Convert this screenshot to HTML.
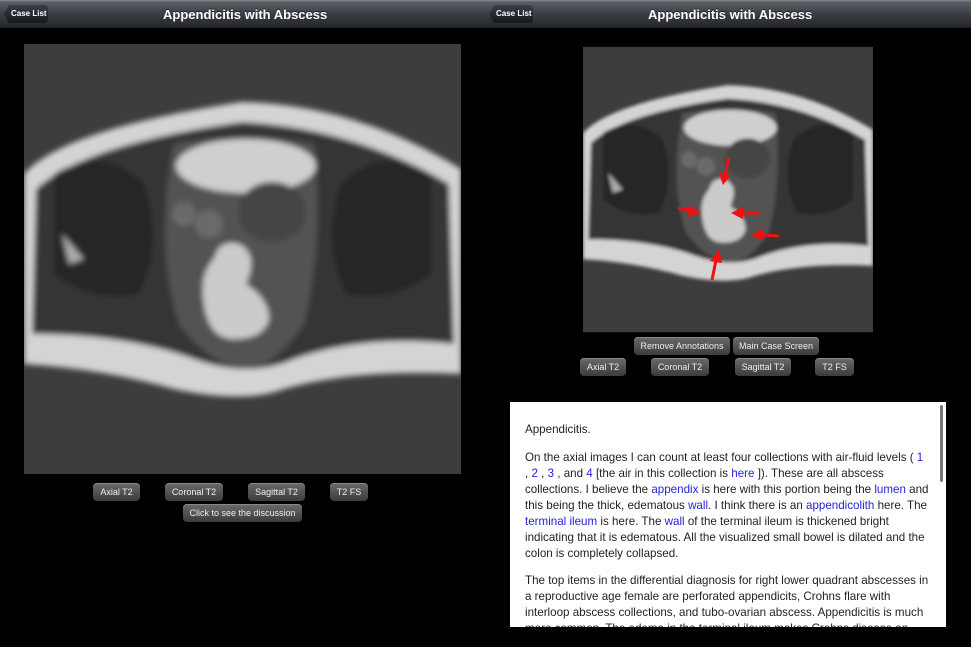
<!DOCTYPE html>
<html><head><meta charset="utf-8"><style>
*{margin:0;padding:0;box-sizing:border-box}
body{width:971px;height:647px;background:#000;position:relative;overflow:hidden;font-family:"Liberation Sans",sans-serif}
.hdr{position:absolute;left:0;top:0;width:971px;height:28px;background:linear-gradient(#8a8e94 0,#5a5f66 2px,#3a3e44 14px,#24272b 27px,#111 28px)}
.title{position:absolute;top:7px;color:#fff;font-weight:bold;font-size:13px;text-shadow:0 -1px 0 #222}
.back{position:absolute;top:5px;height:18px;width:44px;color:#fff;font-weight:bold;font-size:8px;line-height:18px;padding-left:7px;background:linear-gradient(#3a3e45,#15181c);border-radius:3px;clip-path:polygon(5px 0,100% 0,100% 100%,5px 100%,0 50%);}
.btn{position:absolute;height:18px;color:#eee;font-size:9px;line-height:18px;text-align:center;border-radius:4px;background:linear-gradient(#6a6a6a,#3c3c3c);box-shadow:inset 0 1px 0 #888}
.img{position:absolute;overflow:hidden}
.panel{position:absolute;left:510px;top:402px;width:436px;height:225px;background:#fff;overflow:hidden;font-family:"Liberation Sans",sans-serif;font-size:11.6px;color:#222;line-height:16px;padding:20px 0 0 15px}
.panel a{color:#2323d8;text-decoration:none}
.panel div{white-space:nowrap}
.gap{height:11px}
.sb{position:absolute;left:940px;top:405px;width:3px;height:77px;background:#777;border-radius:2px}
</style></head><body>
<svg width="0" height="0" style="position:absolute">
<defs>
<filter id="bl" x="-10%" y="-10%" width="120%" height="120%"><feGaussianBlur stdDeviation="3"/></filter>
<symbol id="mri" viewBox="0 0 437 430">
<rect width="437" height="430" fill="#3d3d3d"/>
<g filter="url(#bl)">
<path d="M0 130 Q40 85 218 58 Q330 60 437 125 L437 330 Q330 325 260 345 Q220 360 150 345 Q80 325 0 320 Z" fill="#d4d4d4"/>
<path d="M12 145 Q60 100 218 78 Q330 84 425 140 L430 300 Q340 290 270 315 Q225 335 170 315 Q100 290 8 290 Z" fill="#343434"/>
<path d="M150 100 Q220 88 290 100 Q300 200 280 280 Q250 325 220 325 Q185 320 155 280 Q130 200 150 100 Z" fill="#535353"/>
<ellipse cx="222" cy="122" rx="70" ry="27" fill="#cfcfcf"/>
<ellipse cx="248" cy="168" rx="34" ry="30" fill="#444"/>
<path d="M180 260 Q175 230 190 215 Q195 195 215 200 Q235 210 222 240 Q245 255 245 275 Q240 295 210 295 Q185 295 180 260 Z" fill="#cbcbcb"/>
<circle cx="185" cy="180" r="14" fill="#6a6a6a"/>
<circle cx="160" cy="170" r="12" fill="#6a6a6a"/>
<path d="M30 130 Q80 100 120 140 Q140 200 115 250 Q70 260 30 230 Z" fill="#262626"/>
<path d="M407 130 Q357 100 317 140 Q297 200 322 250 Q367 260 407 230 Z" fill="#262626"/>
<path d="M38 190 L60 215 L45 220 Z" fill="#aaa"/>
</g>
</symbol>
</defs></svg>

<div class="hdr"></div>
<div class="back" style="left:4px">Case List</div>
<div class="title" style="left:163px">Appendicitis with Abscess</div>
<div class="back" style="left:489px">Case List</div>
<div class="title" style="left:648px">Appendicitis with Abscess</div>

<svg class="img" style="left:24px;top:44px" width="437" height="430"><use href="#mri"/></svg>

<svg class="img" style="left:583px;top:45px" width="290" height="289" viewBox="0 0 290 289">
<use href="#mri" width="290" height="289"/>
<g stroke="#f01010" stroke-width="3" fill="#f01010">
<line x1="146" y1="112" x2="142" y2="130"/><polygon points="136,128 148,130 140,140" stroke="none"/>
<line x1="95" y1="163" x2="108" y2="166"/><polygon points="106,160 118,168 104,172" stroke="none"/>
<line x1="177" y1="168" x2="158" y2="168"/><polygon points="160,162 148,168 160,174" stroke="none"/>
<line x1="196" y1="191" x2="178" y2="190"/><polygon points="180,184 168,190 180,196" stroke="none"/>
<line x1="129" y1="235" x2="133" y2="215"/><polygon points="127,216 136,204 139,218" stroke="none"/>
</g>
</svg>

<div class="btn" style="left:93px;top:483px;width:47px">Axial T2</div>
<div class="btn" style="left:165px;top:483px;width:58px">Coronal T2</div>
<div class="btn" style="left:248px;top:483px;width:57px">Sagittal T2</div>
<div class="btn" style="left:330px;top:483px;width:38px">T2 FS</div>
<div class="btn" style="left:183px;top:504px;width:119px">Click to see the discussion</div>

<div class="btn" style="left:634px;top:337px;width:96px">Remove Annotations</div>
<div class="btn" style="left:733px;top:337px;width:86px">Main Case Screen</div>
<div class="btn" style="left:580px;top:358px;width:46px">Axial T2</div>
<div class="btn" style="left:651px;top:358px;width:58px">Coronal T2</div>
<div class="btn" style="left:735px;top:358px;width:56px">Sagittal T2</div>
<div class="btn" style="left:815px;top:358px;width:39px">T2 FS</div>

<div class="panel">
<div>Appendicitis.</div>
<div style="height:12px"></div>
<div>On the axial images I can count at least four collections with air-fluid levels ( <a>1</a></div>
<div>, <a>2</a> , <a>3</a> , and <a>4</a> [the air in this collection is <a>here</a> ]). These are all abscess</div>
<div>collections. I believe the <a>appendix</a> is here with this portion being the <a>lumen</a> and</div>
<div>this being the thick, edematous <a>wall</a>. I think there is an <a>appendicolith</a> here. The</div>
<div><a>terminal ileum</a> is here. The <a>wall</a> of the terminal ileum is thickened bright</div>
<div>indicating that it is edematous. All the visualized small bowel is dilated and the</div>
<div>colon is completely collapsed.</div>
<div class="gap"></div>
<div>The top items in the differential diagnosis for right lower quadrant abscesses in</div>
<div>a reproductive age female are perforated appendicits, Crohns flare with</div>
<div>interloop abscess collections, and tubo-ovarian abscess. Appendicitis is much</div>
<div>more common. The edema in the terminal ileum makes Crohns disease an</div>
</div>
<div class="sb"></div>
</body></html>
